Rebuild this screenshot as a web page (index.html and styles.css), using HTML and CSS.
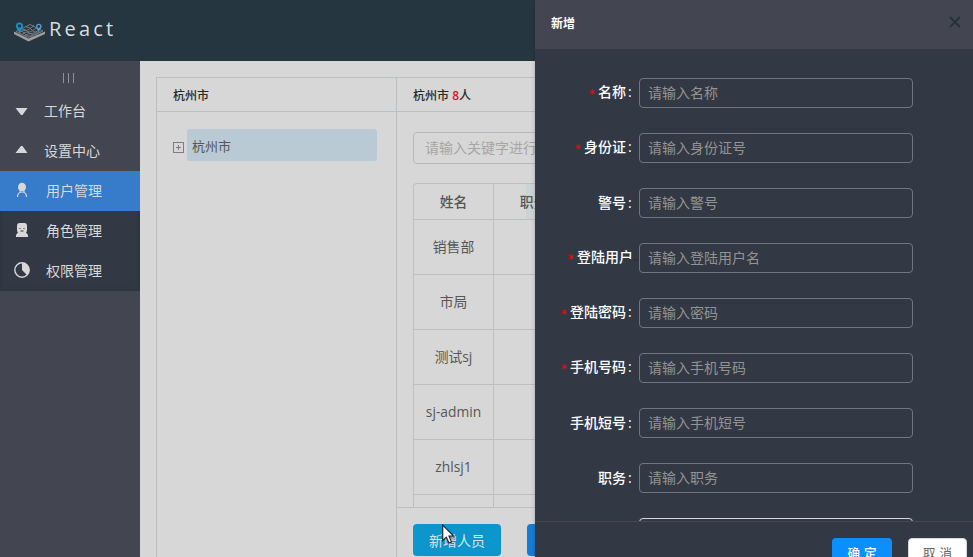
FILE: index.html
```html
<!DOCTYPE html>
<html lang="zh-CN">
<head>
<meta charset="utf-8">
<title>React</title>
<link rel="stylesheet" href="styles.css">
</head>
<body>
<div class="app">
  <header class="topbar">
    <svg class="logo" width="32" height="20" viewBox="0 0 32 20">
      <path d="M0 9.500L14.500 16.500L31 9.500V12L14.500 19.500L0 12Z" fill="#a09d9a"/>
      <g fill="none" stroke="#777c80" stroke-width="1">
        <path d="M2 9.500L16 2.500L29 9L14.500 15.500Z"/>
        <path d="M5 11q3-3 6-2.500t9-5M8 12.500q3-3 6-2.500t9-4.500M11 14q3-3 6-2.500t9-4.500M12 5q4 0 6 3t9 2M8 7q4 0 6 3t9 2M5 9q4 0 6 3t8 2"/>
      </g>
      <path d="M5.500 11C4 8 2 6.500 2 4a3.500 3.500 0 0 1 7 0C9 6.500 7 8 5.500 11Z" fill="#1494ca"/>
      <circle cx="5.500" cy="4" r="1.700" fill="#263640"/>
      <path d="M24.700 10C23.500 7.500 22 6.500 22 4.500a2.800 2.800 0 0 1 5.600 0C27.600 6.500 26 7.500 24.700 10Z" fill="#559dcb"/>
      <circle cx="24.700" cy="4.500" r="1.400" fill="#263640"/>
    </svg>
    <span class="brand">React</span>
  </header>
  <div class="body">
    <nav class="sidebar">
      <div class="grip"><i></i><i></i><i></i></div>
      <div class="item"><svg class="ico" width="16" height="16" viewBox="0 0 16 16"><path d="M1.500 6H13.500L8.500 13H7Z"/></svg><span>工作台</span></div>
      <div class="item"><svg class="ico" width="16" height="16" viewBox="0 0 16 16"><path d="M1.500 11H13.500L8.500 4H7Z"/></svg><span>设置中心</span></div>
      <div class="submenu">
        <div class="item active"><svg class="ico" width="16" height="16" viewBox="0 0 16 16"><ellipse cx="8" cy="5.200" rx="4" ry="4.400"/><path d="M5.500 8.500L8 11L10.500 8.500V10H5.500Z"/><path class="line" d="M3.500 15C3.500 12 5 10.500 7 10M12.500 15C12.500 12 11 10.500 9 10"/></svg><span>用户管理</span></div>
        <div class="item"><svg class="ico" width="16" height="16" viewBox="0 0 16 16"><path d="M5.500 1H10.500Q13 1 13 4V8Q13 9.500 12 10.500L14 13V15H2V13L4 10.500Q3 9.500 3 8V4Q3 1 5.500 1Z"/><path class="face" d="M6 6v1M10 6v1M6.500 9H9.500"/></svg><span>角色管理</span></div>
        <div class="item"><svg class="ico" width="16" height="16" viewBox="0 0 16 16"><circle class="ring" cx="8" cy="8" r="7.200"/><path d="M8 8V1a7 7 0 0 1 5 12Z"/></svg><span>权限管理</span></div>
      </div>
    </nav>
    <main class="main">
      <section class="tree-panel">
        <h2 class="head">杭州市</h2>
        <div class="tree">
          <svg class="plus" width="11" height="11" viewBox="0 0 11 11"><rect x=".5" y=".5" width="10" height="10"/><path d="M3 5.500H8M5.500 3V8"/></svg>
          <span class="node">杭州市</span>
        </div>
      </section>
      <section class="list-panel">
        <h2 class="head">杭州市 <b>8</b>人</h2>
        <div class="list">
          <div class="search">请输入关键字进行</div>
          <div class="table">
            <div class="cell th">姓名</div><div class="cell th">职务</div>
            <div class="cell">销售部</div><div class="cell"></div>
            <div class="cell">市局</div><div class="cell"></div>
            <div class="cell">测试sj</div><div class="cell"></div>
            <div class="cell">sj-admin</div><div class="cell"></div>
            <div class="cell">zhlsj1</div><div class="cell"></div>
            <div class="cell"></div><div class="cell"></div>
          </div>
        </div>
        <div class="actions"><span class="btn add">新增人员</span><span class="btn next"></span></div>
      </section>
    </main>
  </div>
  <aside class="drawer">
    <div class="drawer-head"><span>新增</span>
      <svg width="12" height="12" viewBox="0 0 12 12"><path d="M1 1L11 11M11 1L1 11"/></svg>
    </div>
    <div class="form">
      <div class="row"><label class="req">名称<i>:</i></label><div class="input">请输入名称</div></div>
      <div class="row"><label class="req">身份证<i>:</i></label><div class="input">请输入身份证号</div></div>
      <div class="row"><label>警号<i>:</i></label><div class="input">请输入警号</div></div>
      <div class="row"><label class="req">登陆用户<em>..</em></label><div class="input">请输入登陆用户名</div></div>
      <div class="row"><label class="req">登陆密码<i>:</i></label><div class="input">请输入密码</div></div>
      <div class="row"><label class="req">手机号码<i>:</i></label><div class="input">请输入手机号码</div></div>
      <div class="row"><label>手机短号<i>:</i></label><div class="input">请输入手机短号</div></div>
      <div class="row"><label>职务<i>:</i></label><div class="input">请输入职务</div></div>
      <div class="row"><label></label><div class="input light"></div></div>
    </div>
    <div class="drawer-foot"><span class="ok">确 定</span><span class="cancel">取 消</span></div>
  </aside>
  <svg class="cursor" width="13" height="20" viewBox="0 0 13 20"><path d="M.7 1V16.500L4.300 13.200L7 19L9.500 18L7 12.200H11.700Z"/></svg>
</div>
</body>
</html>
```
FILE: styles.css
```css
* { box-sizing: border-box; }
body { margin: 0; }
.app {
  position: relative;
  width: 973px;
  height: 557px;
  overflow: hidden;
  display: flex;
  flex-direction: column;
  background: #d7d7d7;
  font: 14px/20px "Open Sans", "Noto Sans CJK SC", sans-serif;
  color: #565656;
}
.topbar {
  height: 61px;
  flex: none;
  display: flex;
  align-items: center;
  padding: 0 0 0 14px;
  background: #263640;
}
.logo { margin-top: 2px; }
.brand {
  margin: -3px 0 0 3px;
  font-size: 20px;
  letter-spacing: 3.2px;
  color: #d8dcde;
}
.body { flex: 1; min-height: 0; display: flex; }
.sidebar { width: 140px; flex: none; background: #434651; color: #d9d9d9; }
.grip { height: 30px; padding: 12px 3px 0 0; display: flex; justify-content: center; gap: 4px; }
.grip i { width: 1px; height: 10px; background: #8e929b; }
.item { height: 40px; display: flex; align-items: center; gap: 14px; padding-left: 14px; }
.submenu { background: #323944; box-shadow: inset 0 0 4px #27333e; }
.submenu .item { gap: 16px; }
.submenu .active { background: #377bcb; }
.ico { fill: #d7d7d7; flex: none; margin-top: -2px; }
.ico .line { fill: none; stroke: #d7d7d7; stroke-width: 1.200; }
.ico .face { fill: none; stroke: #343b45; stroke-width: 1; }
.ico .ring { fill: none; stroke: #d7d7d7; stroke-width: 1.400; }
.main { flex: 1; display: flex; padding: 16px 0 0 16px; min-width: 0; }
.tree-panel { width: 241px; flex: none; border: 1px solid #bbc0c2; border-bottom: 0; }
.list-panel { flex: 1; min-width: 0; border-top: 1px solid #bbc0c2; display: flex; flex-direction: column; }
.head {
  margin: 0;
  height: 34px;
  flex: none;
  padding-left: 16px;
  border-bottom: 1px solid #bbc0c2;
  font-size: 12px;
  line-height: 35px;
  font-weight: 500;
  color: #292929;
}
.head b { color: #dc1826; font-weight: 600; }
.tree { display: flex; align-items: center; padding: 17px 0 0 16px; }
.plus { margin: 4px 3px 0 0; fill: none; stroke: #817b81; }
.node { width: 190px; height: 32px; padding-left: 5px; line-height: 34px; font-size: 13px; background: #b9cad4; border-radius: 3px; }
.list { flex: 1; min-height: 0; overflow: hidden; padding: 20px 0 0 16px; }
.search {
  height: 32px;
  width: 400px;
  padding-left: 11px;
  border: 1px solid #b5b9bb;
  border-radius: 4px;
  line-height: 30px;
  color: #a8a6a3;
}
.table {
  width: 161px;
  margin-top: 19px;
  display: grid;
  grid-template-columns: 80px 80px;
  grid-template-rows: 36px;
  grid-auto-rows: 55px;
  border: solid #bbc0c2;
  border-width: 1px 0 0 1px;
  border-radius: 4px 0 0;
}
.cell {
  display: flex;
  align-items: center;
  justify-content: center;
  border: solid #bbc0c2;
  border-width: 0 1px 1px 0;
  font-size: 13.800px;
}
.th { font-weight: 500; }
.th:nth-child(2) { background: linear-gradient(90deg, transparent 32px, #cad3d6 32px, #cad3d6 37px, transparent 41px); }
.actions { height: 50px; flex: none; display: flex; gap: 26px; padding: 16px 0 0 16px; border-top: 1px solid #bbc0c2; }
.btn { width: 88px; height: 32px; border-radius: 4px; color: #d9e2e5; text-align: center; line-height: 33px; }
.add { background: #0c96cc; }
.next { background: #177bd3; }
.drawer {
  position: absolute;
  top: 0;
  right: 0;
  width: 438px;
  height: 557px;
  display: flex;
  flex-direction: column;
  background: #323944;
  box-shadow: -1px 0 3px rgba(0, 0, 0, .15);
}
.drawer-head {
  height: 49px;
  flex: none;
  display: flex;
  justify-content: space-between;
  padding: 14px 12px 0 16px;
  background: #434651;
  color: #fff;
  font-size: 12px;
  font-weight: 700;
}
.drawer-head svg { margin-top: 2px; fill: none; stroke: #23323c; stroke-width: 1.900; }
.form { flex: 1; min-height: 0; overflow: hidden; padding-top: 29px; }
.row { height: 30px; margin-bottom: 25px; display: flex; align-items: center; }
.row label {
  width: 104px;
  flex: none;
  display: flex;
  justify-content: flex-end;
  color: #fff;
  font-weight: 500;
  white-space: nowrap;
}
.req::before {
  content: "*";
  width: 7px;
  margin: 2px 3px 0 0;
  color: #f00;
  font: 12px/20px "DejaVu Sans Mono", monospace;
}
.row i { width: 13px; padding-left: 2px; font-style: normal; }
.row em { width: 6px; font-style: normal; font-size: 11px; color: #1f2731; }
.input {
  width: 274px;
  height: 30px;
  padding-left: 8px;
  border: 1px solid #707681;
  border-radius: 4px;
  line-height: 28px;
  color: #96938f;
}
.light { border-color: #d4d7d6; }
.drawer-foot {
  height: 36px;
  flex: none;
  display: flex;
  justify-content: flex-end;
  gap: 16px;
  padding: 16px 6px 0 0;
  border-top: 1px solid #434853;
}
.drawer-foot span { height: 32px; border-radius: 4px; text-align: center; font-size: 12.500px; word-spacing: 1px; line-height: 31px; }
.drawer-foot .ok { width: 60px; background: #0b8fff; color: #fff; font-weight: 500; }
.drawer-foot .cancel { width: 59px; background: #fff; border: 1px solid #d9d9d9; color: #666; line-height: 29px; }
.cursor { position: absolute; left: 442px; top: 524px; fill: #fff; stroke: #1d2a35; stroke-width: 1.200; }
```
